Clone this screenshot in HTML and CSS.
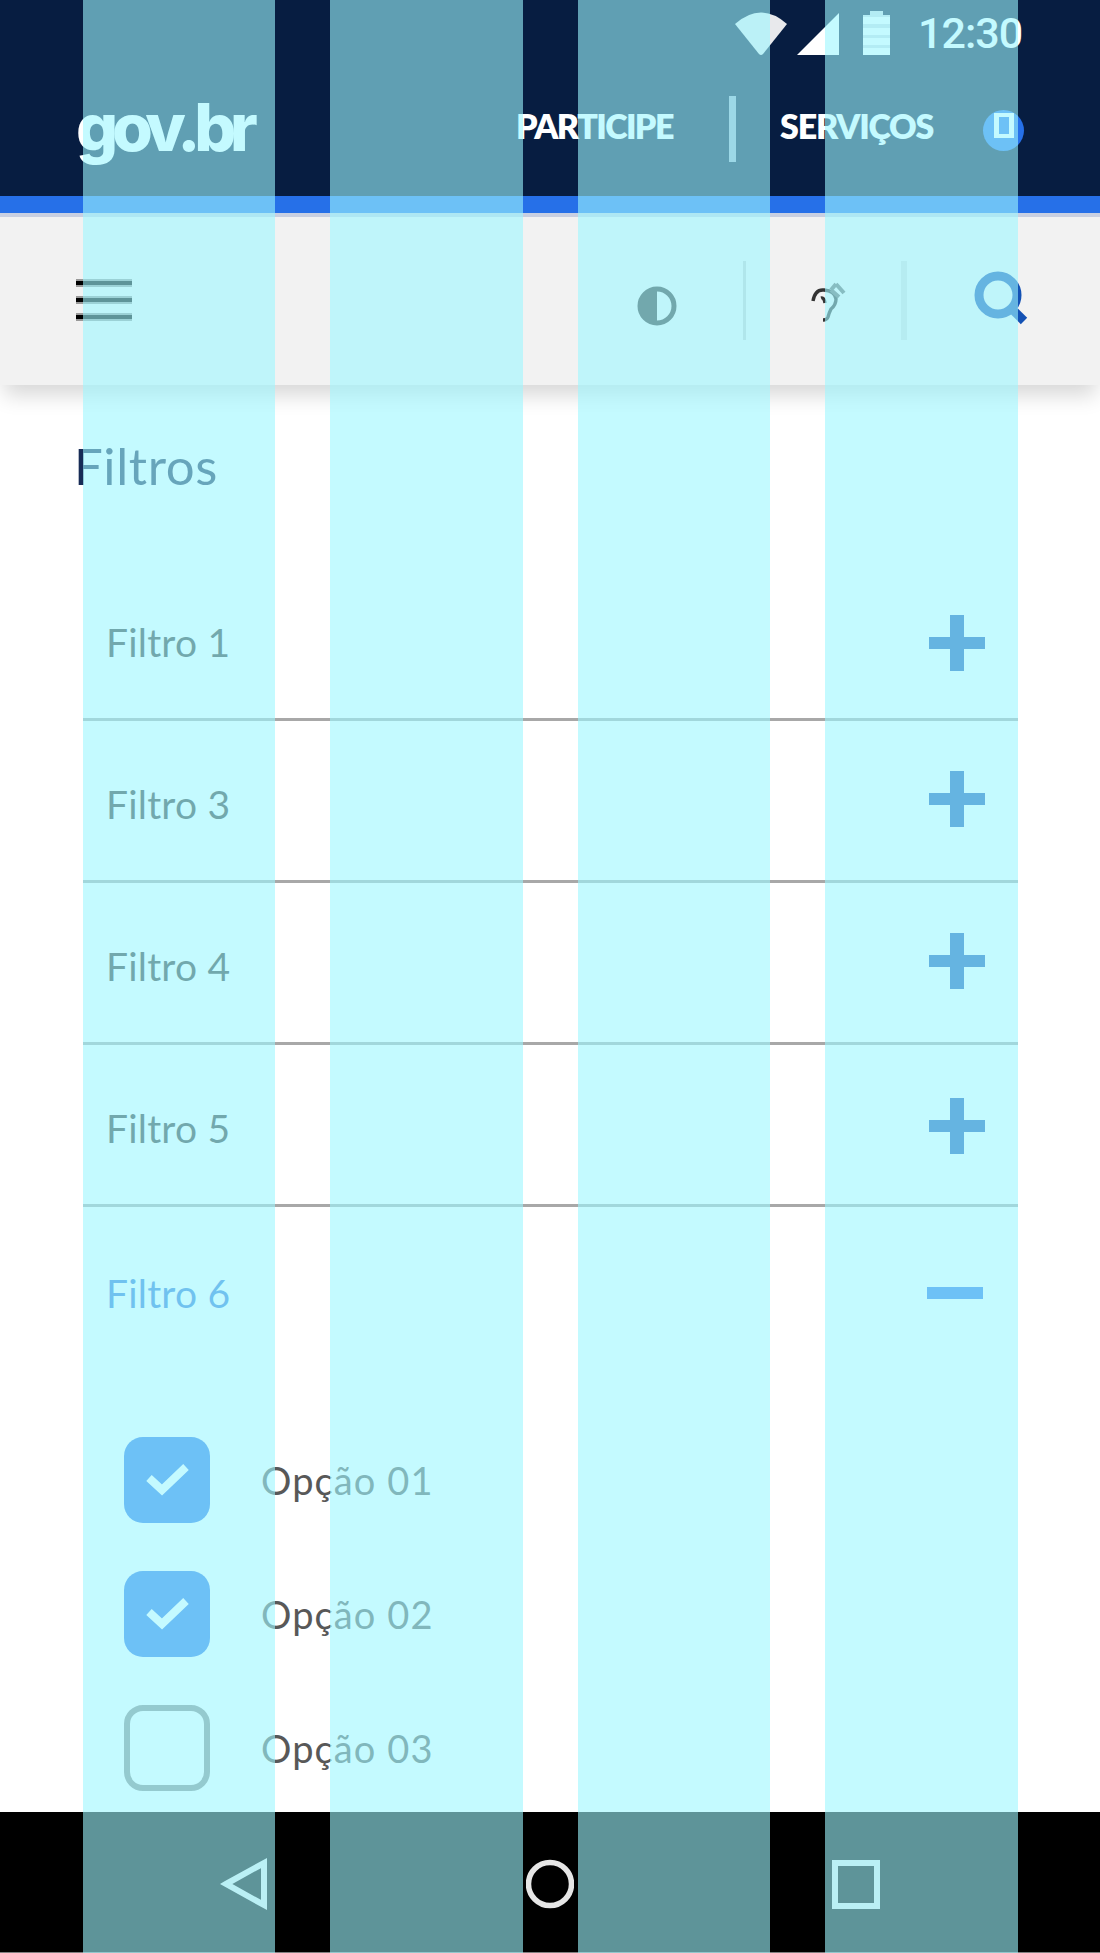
FILE: index.html
```html
<!DOCTYPE html>
<html lang="pt-BR">
<head>
<meta charset="utf-8">
<title>gov.br – Filtros</title>
<link rel="stylesheet" href="styles.css">
</head>
<body>
<div class="screen">
  <header class="header">
    <div class="status">
      <svg class="wifi" width="52" height="45" viewBox="0 0 52 45"><path d="M0 14Q26-9 52 14L28 44Q26 46 24 44Z" fill="#e8e9ec"/></svg>
      <svg class="signal" width="42" height="45" viewBox="0 0 42 45"><path d="M0 45L42 3V45Z" fill="#fff"/></svg>
      <svg class="battery" width="27" height="45" viewBox="0 0 27 45"><path d="M7 1h13v4h7v40H0V5h7Z" fill="#d5dbe4"/><path d="M0 7h27v7H0zM0 18h27v7H0zM0 28h27v7H0zM0 38h27v7H0z" fill="#fff"/></svg>
      <span class="time">12:30</span>
    </div>
    <div class="brand-row">
      <span class="logo">gov.br</span>
      <a class="link link-participe">PARTICIPE</a>
      <span class="link-divider"></span>
      <a class="link link-servicos">SERVIÇOS</a>
      <span class="badge"><span class="badge-glyph"></span></span>
    </div>
  </header>
  <div class="toolbar">
    <div class="menu"><i></i><i></i><i></i></div>
    <svg class="contrast" width="40" height="40" viewBox="0 0 40 40"><circle cx="20" cy="20" r="17" fill="none" stroke="#333" stroke-width="5"/><path d="M20 2a18 18 0 0 0 0 36Z" fill="#333"/></svg>
    <span class="tool-divider"></span>
    <svg class="ear" width="36" height="42" viewBox="0 0 36 42" fill="none" stroke="#333" stroke-width="3.4"><path d="M2 20Q4 8 13 9Q24 10 25 18Q25 24 20 28Q18 32 17 36Q16 39 12 39"/><path d="M10 17Q13 16 14 22"/><path d="M20 9l8 7M25 3l8 9M20 9l5-6" stroke="#666" stroke-width="4"/></svg>
    <span class="tool-divider tool-divider-soft"></span>
    <svg class="search" width="56" height="58" viewBox="0 0 56 58" fill="none" stroke="#1351b4"><circle cx="24" cy="24" r="19" stroke-width="9"/><path d="M38 38L50 50" stroke-width="9"/></svg>
  </div>
  <main class="content">
    <h1 class="title">Filtros</h1>
    <section class="filters">
      <div class="filter"><span>Filtro 1</span><b class="plus plus-first"></b></div>
      <div class="filter"><span>Filtro 3</span><b class="plus plus-high"></b></div>
      <div class="filter"><span>Filtro 4</span><b class="plus plus-high"></b></div>
      <div class="filter"><span>Filtro 5</span><b class="plus plus-mid"></b></div>
      <div class="filter filter-open"><span>Filtro 6</span><b class="minus"></b></div>
    </section>
    <section class="options">
      <div class="option"><span class="check checked"><svg width="46" height="36" viewBox="0 0 46 36"><path d="M5 16L18 28L42 5" fill="none" stroke="#fff" stroke-width="8"/></svg></span><span>Opção 01</span></div>
      <div class="option"><span class="check checked"><svg width="46" height="36" viewBox="0 0 46 36"><path d="M5 16L18 28L42 5" fill="none" stroke="#fff" stroke-width="8"/></svg></span><span>Opção 02</span></div>
      <div class="option"><span class="check"></span><span>Opção 03</span></div>
    </section>
  </main>
  <nav class="navbar">
    <svg class="back" width="48" height="56" viewBox="0 0 48 56"><path d="M6 28L44 7V49Z" fill="none" stroke="#e6e6e6" stroke-width="6"/></svg>
    <svg class="home" width="48" height="50" viewBox="0 0 48 50"><circle cx="24" cy="25" r="21.5" fill="none" stroke="#e6e6e6" stroke-width="5.5"/></svg>
    <span class="recent"></span>
  </nav>
  <div class="grid-overlay"><i></i><i></i><i></i><i></i></div>
</div>
</body>
</html>
```
FILE: styles.css
```css
* { box-sizing: border-box; }
body { margin: 0; background: #fff; font-family: Lato, "Open Sans", sans-serif; }
svg { display: block; flex: none; }

.screen {
  position: relative;
  width: 1100px;
  height: 1953px;
  display: flex;
  flex-direction: column;
  overflow: hidden;
}

.header {
  height: 217px;
  background: #071d41;
  border-bottom: 4px solid #c9d0e2;
  box-shadow: inset 0 -17px #2670e8;
  flex: none;
}
.status {
  display: flex;
  height: 90px;
  padding: 10px 0 0 735px;
}
.signal { margin-left: 10px; }
.battery { margin-left: 24px; }
.time {
  margin-left: 28px;
  color: #fff;
  font: 500 43px/47px Roboto, sans-serif;
  letter-spacing: -1px;
}
.brand-row {
  display: flex;
  align-items: center;
  height: 78px;
  padding-left: 76px;
  color: #fff;
}
.logo {
  width: 440px;
  font: 800 66px/78px Inter, sans-serif;
  letter-spacing: -6.3px;
  padding-bottom: 4px;
}
.link { font: 800 34px/40px Lato, sans-serif; flex: none; white-space: nowrap; padding-bottom: 6px; }
.link-participe { width: 213px; letter-spacing: -1.6px; }
.link-divider { width: 7px; height: 66px; background: #9cabc2; }
.link-servicos { width: 203px; margin-left: 44px; letter-spacing: -1.2px; }
.badge {
  width: 41px;
  height: 41px;
  margin-top: 2px;
  border-radius: 50%;
  background: #2670e8;
  display: flex;
  justify-content: center;
  padding-top: 3px;
}
.badge-glyph { width: 20px; height: 25px; border: 5px solid #fff; border-width: 4px 5px; }

.toolbar {
  height: 168px;
  flex: none;
  display: flex;
  align-items: flex-start;
  padding: 44px 0 0 76px;
  background: #f2f2f2;
  box-shadow: 0 14px 20px -4px rgba(0, 0, 0, .16);
}
.menu {
  width: 56px;
  height: 42px;
  margin-top: 18px;
  display: flex;
  flex-direction: column;
  justify-content: space-between;
}
.menu i { height: 8px; background: #000; border: solid #999; border-width: 2px 0; }
.contrast { margin: 25px 0 0 505px; }
.tool-divider { width: 3px; height: 79px; margin-left: 66px; background: #ccc; }
.ear { margin: 20px 0 0 65px; }
.tool-divider-soft { width: 6px; margin-left: 54px; background: #dcdcdc; }
.search { margin: 10px 0 0 67px; }

.content { height: 1427px; flex: none; }
.title {
  margin: 49px 0 0 74px;
  color: #172b56;
  font: 400 51px/64px Lato, sans-serif;
  letter-spacing: .6px;
}
.filters { margin: 61px 82px 0 83px; }
.filter {
  height: 162px;
  display: flex;
  align-items: center;
  justify-content: space-between;
  padding: 7px 32px 0 23px;
  border-bottom: 3px solid #a8a8a8;
  color: #333;
  font-size: 39px;
  letter-spacing: .2px;
}
.plus { width: 58px; height: 58px; background: linear-gradient(#1351b4, #1351b4) center / 14px 56px no-repeat, linear-gradient(#1351b4, #1351b4) center / 56px 12px no-repeat; }
.plus-first { margin-top: 1px; }
.plus-high { margin-bottom: 11px; }
.plus-mid { margin-bottom: 5px; }
.filter-open { color: #2f73d8; border: 0; padding-top: 9px; padding-right: 35px; }
.minus { width: 56px; height: 12px; background: #2670e8; }

.options { padding: 68px 0 0 124px; display: grid; row-gap: 48px; }
.option { display: flex; align-items: center; height: 86px; gap: 51px; font-size: 38px; letter-spacing: 1.1px; color: #585858; }
.check { width: 86px; height: 86px; border: 6px solid #888; border-radius: 19px; display: grid; place-items: center; }
.checked { border: 0; background: #2670e8; }

.navbar { height: 141px; flex: none; display: flex; align-items: flex-start; padding: 44px 0 0 220px; background: #000; border-bottom: 1px solid #808080; }
.home { margin: 3px 0 0 258px; }
.recent { width: 48px; height: 49px; margin: 4px 0 0 258px; border: 6px solid #e6e6e6; }

.grid-overlay {
  position: absolute;
  inset: 0;
  display: grid;
  grid-template-columns: 192px 193px 192px 193px;
  column-gap: 55px;
  padding-left: 83px;
  pointer-events: none;
}
.grid-overlay i { background: rgba(157, 246, 255, .6); }
```
